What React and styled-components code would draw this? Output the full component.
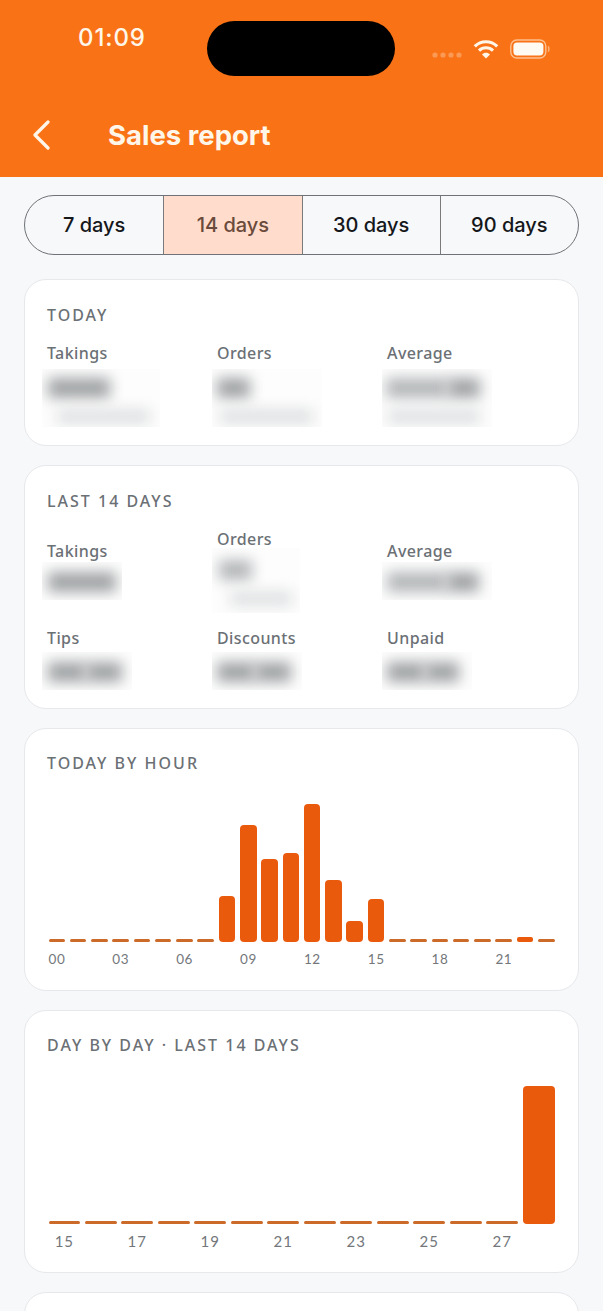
import React from 'react';
import styled, { createGlobalStyle } from 'styled-components';

const GlobalStyle = createGlobalStyle`
    html, body {
        margin: 0;
        padding: 0;
        background: #f6f8fa;
    }
    * {
        box-sizing: border-box;
    }
`;

const hourly = [3, 3, 3, 3, 3, 3, 3, 3, 46, 117, 83, 89, 138, 62, 21, 43, 3, 3, 3, 3, 3, 3, 5, 3];
const daily = [3, 3, 3, 3, 3, 3, 3, 3, 3, 3, 3, 3, 3, 138];
const hourLabels = ['00', '', '', '03', '', '', '06', '', '', '09', '', '', '12', '', '', '15', '', '', '18', '', '', '21', '', ''];
const dayLabels = ['15', '', '17', '', '19', '', '21', '', '23', '', '25', '', '27', ''];
const tabs = ['7 days', '14 days', '30 days', '90 days'];

function App() {
    return (
        <Page>
            <GlobalStyle />
            <Header>
                <StatusBar>
                    <Time>01:09</Time>
                    <Island />
                    <StatusIcons>
                        <svg width="30" height="8" viewBox="0 0 30 8">
                            <circle cx="3" cy="4" r="2.6" fill="#fb9a55" />
                            <circle cx="11" cy="4" r="2.6" fill="#fb9a55" />
                            <circle cx="19" cy="4" r="2.6" fill="#fb9a55" />
                            <circle cx="27" cy="4" r="2.6" fill="#fb9a55" />
                        </svg>
                        <svg width="26" height="20" viewBox="0 0 26 20" fill="none" stroke="#fff6ea" strokeWidth="3.2">
                            <path d="M1.8 7.4C8 1.2 18 1.2 24.2 7.4" />
                            <path d="M6 11.6C9.9 7.8 16.1 7.8 20 11.6" />
                            <path d="M13 19.6L9 15.4C11.2 13.3 14.8 13.3 17 15.4Z" fill="#fff6ea" stroke="none" />
                        </svg>
                        <svg width="40" height="20" viewBox="0 0 40 20" fill="none">
                            <rect x="0.8" y="1" width="35" height="18" rx="6" stroke="#fdc08e" strokeWidth="1.4" />
                            <rect x="3.4" y="3.6" width="30" height="12.8" rx="3.6" fill="#fffaf2" />
                            <path d="M38 7.5C39.2 8 39.2 12 38 12.5" stroke="#fdb37a" strokeWidth="1.5" />
                        </svg>
                    </StatusIcons>
                </StatusBar>
                <TitleRow>
                    <BackIcon width="18" height="30" viewBox="0 0 18 30" fill="none">
                        <path d="M16 2L3 15L16 28" stroke="#fff6ea" strokeWidth="3.2" strokeLinecap="round" strokeLinejoin="round" />
                    </BackIcon>
                    <Title>Sales report</Title>
                </TitleRow>
            </Header>

            <Content>
                <Tabs>
                    {tabs.map((tab, index) => (
                        <Tab key={tab} $active={index === 1}>{tab}</Tab>
                    ))}
                </Tabs>

                <Card>
                    <CardTitle>TODAY</CardTitle>
                    <StatGrid>
                        <Stat>
                            <StatLabel>Takings</StatLabel>
                            <Patch $gap={7} $h={58} $w={118}>
                                <BlobRow $top={9} $left={6}><Blob $w={62} /></BlobRow>
                                <BlobRow $top={11} $left={15}><Blob $w={93} $faint /></BlobRow>
                            </Patch>
                        </Stat>
                        <Stat>
                            <StatLabel>Orders</StatLabel>
                            <Patch $gap={7} $h={58} $w={110}>
                                <BlobRow $top={9} $left={5}><Blob $w={33} /></BlobRow>
                                <BlobRow $top={11} $left={8}><Blob $w={93} $faint /></BlobRow>
                            </Patch>
                        </Stat>
                        <Stat>
                            <StatLabel>Average</StatLabel>
                            <Patch $gap={7} $h={58} $w={110}>
                                <BlobRow $top={9} $left={4}>
                                    <Blob $w={62} $light />
                                    <Blob $w={32} />
                                </BlobRow>
                                <BlobRow $top={11} $left={6}><Blob $w={92} $faint /></BlobRow>
                            </Patch>
                        </Stat>
                    </StatGrid>
                </Card>

                <Card>
                    <CardTitle>LAST 14 DAYS</CardTitle>
                    <StatGrid>
                        <Stat>
                            <StatLabel>Takings</StatLabel>
                            <Patch $gap={2} $h={38} $w={80}>
                                <BlobRow $top={10} $left={6}><Blob $w={68} /></BlobRow>
                            </Patch>
                        </Stat>
                        <Stat>
                            <StatLabel>Orders</StatLabel>
                            <Patch $gap={0} $h={65} $w={88}>
                                <BlobRow $top={12} $left={7}><Blob $w={33} $light /></BlobRow>
                                <BlobRow $top={11} $left={18}><Blob $w={62} $faint /></BlobRow>
                            </Patch>
                        </Stat>
                        <Stat>
                            <StatLabel>Average</StatLabel>
                            <Patch $gap={2} $h={38} $w={110}>
                                <BlobRow $top={10} $left={5}>
                                    <Blob $w={60} $light />
                                    <Blob $w={32} />
                                </BlobRow>
                            </Patch>
                        </Stat>
                        <Stat>
                            <StatLabel>Tips</StatLabel>
                            <Patch $gap={5} $h={38} $w={90}>
                                <BlobRow $top={10} $left={6}>
                                    <Blob $w={38} />
                                    <Blob $w={36} />
                                </BlobRow>
                            </Patch>
                        </Stat>
                        <Stat>
                            <StatLabel>Discounts</StatLabel>
                            <Patch $gap={5} $h={38} $w={90}>
                                <BlobRow $top={10} $left={5}>
                                    <Blob $w={38} />
                                    <Blob $w={36} />
                                </BlobRow>
                            </Patch>
                        </Stat>
                        <Stat>
                            <StatLabel>Unpaid</StatLabel>
                            <Patch $gap={5} $h={38} $w={90}>
                                <BlobRow $top={10} $left={5}>
                                    <Blob $w={38} />
                                    <Blob $w={34} />
                                </BlobRow>
                            </Patch>
                        </Stat>
                    </StatGrid>
                </Card>

                <ChartCard title="TODAY BY HOUR" bars={hourly} labels={hourLabels} />
                <ChartCard title="DAY BY DAY · LAST 14 DAYS" bars={daily} labels={dayLabels} wide />
                <Card $empty />
            </Content>
        </Page>
    );
}

function ChartCard({ title, bars, labels, wide }) {
    return (
        <ChartPanel>
            <CardTitle>{title}</CardTitle>
            <Bars $count={bars.length}>
                {bars.map((value, index) => (
                    <Bar key={index} $h={value} />
                ))}
            </Bars>
            <Ticks $count={labels.length}>
                {labels.map((label, index) => (
                    <Tick key={index} $wide={wide}>{label}</Tick>
                ))}
            </Ticks>
        </ChartPanel>
    );
}

export default App;

const Page = styled.div`
    width: 603px;
    height: 1311px;
    overflow: hidden;
    background: #f6f8fa;
    font-family: "Inter", "Liberation Sans", sans-serif;
`;

const Header = styled.header`
    height: 177px;
    background: #f97316;
    color: #fff6ea;
`;

const StatusBar = styled.div`
    height: 100px;
    padding: 21px 53px 0 78px;
    display: flex;
    align-items: flex-start;
`;

const Time = styled.div`
    width: 129px;
    margin-top: 1px;
    font-size: 24px;
    line-height: 32px;
    font-weight: 500;
    letter-spacing: 0.9px;
`;

const Island = styled.div`
    width: 189px;
    height: 55px;
    border-radius: 28px;
    background: #000;
`;

const StatusIcons = styled.div`
    margin: 18px 0 0 37px;
    display: flex;
    align-items: center;
    gap: 11px;

    svg:first-child {
        margin-top: 12px;
    }
`;

const TitleRow = styled.div`
    display: flex;
    align-items: center;
    padding: 19px 0 0 32px;
`;

const BackIcon = styled.svg`
    flex: none;
    margin-right: 58px;
`;

const Title = styled.h1`
    margin: 0;
    font-size: 27.5px;
    line-height: 32px;
    font-weight: 700;
`;

const Content = styled.main`
    padding: 18px 24px 0;
    display: flex;
    flex-direction: column;
    gap: 19px;
`;

const Tabs = styled.div`
    height: 60px;
    margin-bottom: 5px;
    display: grid;
    grid-template-columns: repeat(4, 1fr);
    border: 1.5px solid #6f7276;
    border-radius: 30px;
    overflow: hidden;
`;

const Tab = styled.div`
    display: flex;
    align-items: center;
    justify-content: center;
    font-size: 20px;
    font-weight: 500;
    color: ${(p) => (p.$active ? '#6a4a3b' : '#15171a')};
    background: ${(p) => (p.$active ? '#ffdccb' : 'transparent')};
    border-left: 1.5px solid #7b7a7a;

    &:first-child {
        border-left: none;
    }
`;

const Card = styled.section`
    padding: 25.5px 22px 0;
    background: #fff;
    border: 1.5px solid #e6e8eb;
    border-radius: 22px;
    height: ${(p) => (p.$empty ? '80px' : 'auto')};
    flex: none;
`;

const ChartPanel = styled(Card)`
    padding-top: 24.5px;
`;

const CardTitle = styled.h2`
    margin: 0;
    font-family: "Noto Sans", "Liberation Sans", sans-serif;
    font-size: 16px;
    line-height: 18px;
    font-weight: 500;
    letter-spacing: 2px;
    color: #6b7075;
`;

const StatGrid = styled.div`
    margin: 20px 0 18.5px;
    display: grid;
    grid-template-columns: 170px 170px 1fr;
    row-gap: 16px;
    align-items: center;
`;

const Stat = styled.div`
    display: flex;
    flex-direction: column;
`;

const StatLabel = styled.div`
    font-family: "Noto Sans", "Liberation Sans", sans-serif;
    font-size: 16px;
    line-height: 18px;
    font-weight: 500;
    letter-spacing: 0.4px;
    color: #6b7075;
`;

const Patch = styled.div`
    width: ${(p) => p.$w}px;
    height: ${(p) => p.$h}px;
    margin: ${(p) => p.$gap}px 0 0 -5px;
    overflow: hidden;
    background: #fdfdfd;
`;

const BlobRow = styled.div`
    display: flex;
    margin: ${(p) => p.$top}px 0 0 ${(p) => p.$left}px;
`;

const blobColor = (p) => {
    if (p.$faint) return '#dfe1e2';
    if (p.$light) return '#b4b7b9';
    return '#a0a3a5';
};

const Blob = styled.div`
    width: ${(p) => p.$w}px;
    height: ${(p) => (p.$faint ? 15 : 20)}px;
    background: ${blobColor};
    filter: blur(7px);
`;

const Bars = styled.div`
    margin: 32px 1.5px 0;
    height: 138px;
    display: grid;
    grid-template-columns: repeat(${(p) => p.$count}, 1fr);
    column-gap: 4.75px;
    align-items: end;
`;

const Bar = styled.div`
    height: ${(p) => p.$h}px;
    border-radius: ${(p) => (p.$h > 5 ? 4 : 2)}px;
    background: ${(p) => (p.$h > 3 ? '#ea5a0c' : '#cc6a2a')};
`;

const Ticks = styled.div`
    margin: 9px 1.5px 23.5px;
    display: grid;
    grid-template-columns: repeat(${(p) => p.$count}, 1fr);
    column-gap: 4.75px;
`;

const Tick = styled.div`
    height: 16px;
    white-space: nowrap;
    text-align: center;
    font-family: "Lato", "Liberation Sans", sans-serif;
    font-size: ${(p) => (p.$wide ? 15 : 13.5)}px;
    line-height: 16px;
    letter-spacing: ${(p) => (p.$wide ? 1 : 0.6)}px;
    color: #73777b;
`;
